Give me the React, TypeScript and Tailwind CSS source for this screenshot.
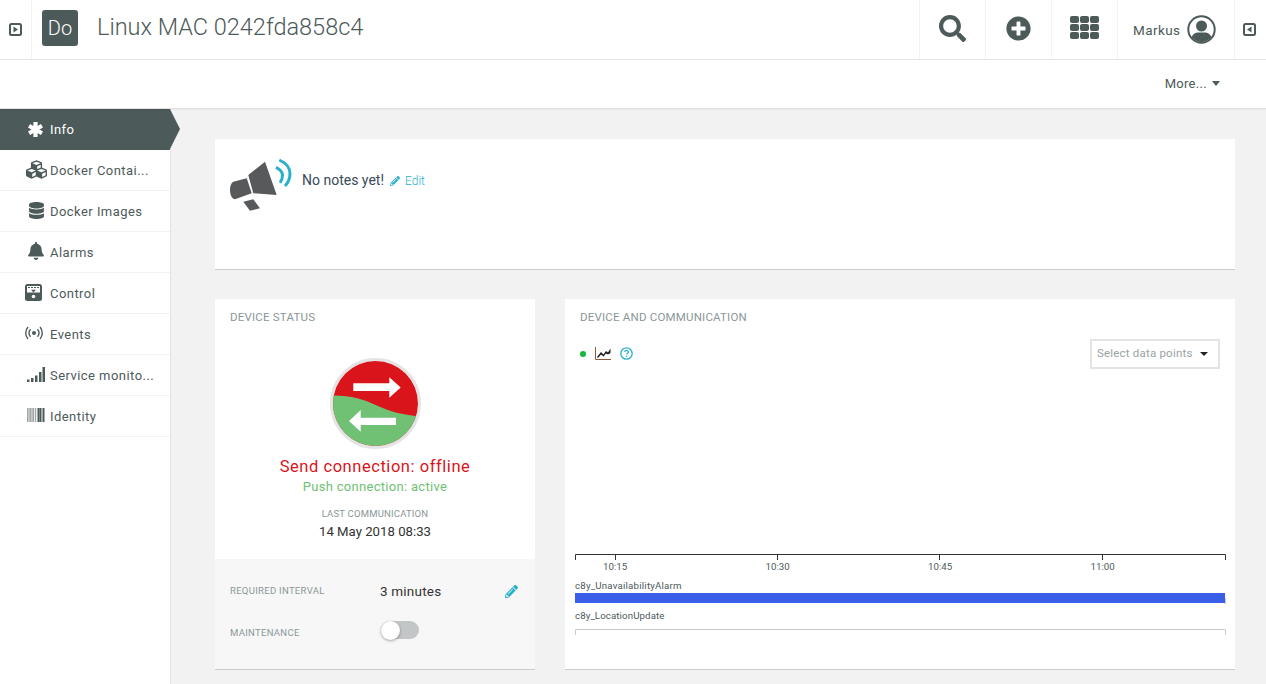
import { FaBell, FaCubes, FaDatabase, FaPencilAlt, FaPlusCircle, FaSearch } from "react-icons/fa";

const font = { fontFamily: "Roboto, sans-serif" };

function ToggleIcon({ flip }: { flip?: boolean }) {
  return (
    <svg width="13" height="13" viewBox="0 0 13 13" style={flip ? { transform: "scaleX(-1)" } : undefined}>
      <rect x="1" y="1" width="11" height="11" rx="1.5" fill="none" stroke="#4d5a5a" strokeWidth="2" />
      <path d="M4.5 3.5 9 6.5 4.5 9.5z" fill="#4d5a5a" />
    </svg>
  );
}

function GridIcon() {
  const cells = [0, 1, 2, 3, 4, 5, 6, 7, 8];
  return (
    <svg width="29" height="23" viewBox="0 0 29 23" fill="#4d5a5a" className="mb-[4px]">
      {cells.map((i) => (
        <rect key={i} x={(i % 3) * 10} y={Math.floor(i / 3) * 8} width="9" height="7" rx="2" />
      ))}
    </svg>
  );
}

function UserIcon() {
  return (
    <svg width="29" height="29" viewBox="0 0 29 29">
      <defs>
        <clipPath id="user-clip">
          <circle cx="14.5" cy="14.5" r="12.5" />
        </clipPath>
      </defs>
      <circle cx="14.5" cy="14.5" r="13.2" fill="none" stroke="#4d5a5a" strokeWidth="2" />
      <g clipPath="url(#user-clip)" fill="#4d5a5a">
        <circle cx="14.5" cy="11" r="5.5" />
        <path d="M3.5 29c0-8 3-11 7-11.5h8c4 .5 7 3.5 7 11.5z" />
      </g>
    </svg>
  );
}

function AsteriskIcon() {
  return (
    <svg width="15" height="15" viewBox="0 0 15 15" stroke="#fff" strokeWidth="4.2">
      <path d="M7.5 0v15M1 3.7l13 7.600M1 11.300l13-7.600" />
    </svg>
  );
}

function ControlIcon() {
  return (
    <svg width="17" height="17" viewBox="0 0 17 17" className="mr-[5px]">
      <rect width="17" height="17" rx="2.5" fill="#4d5a5a" />
      <rect x="2" y="2" width="13" height="6.5" fill="#fff" />
      <path d="M3 3.500h2M6 3.500h2M9 3.500h2M12 3.500h2" stroke="#4d5a5a" strokeWidth="1.2" />
      <path d="M8.500 8.500 6 5.800h5z" fill="#4d5a5a" />
      <circle cx="8.500" cy="12.500" r="1.800" fill="#fff" />
    </svg>
  );
}

function EventsIcon() {
  return (
    <svg width="18" height="14" viewBox="0 0 18 14" fill="none" stroke="#4d5a5a" strokeWidth="1.4" className="mr-[5px]">
      <circle cx="9" cy="7" r="2" fill="#4d5a5a" stroke="none" />
      <path d="M5.500 3.200a5.500 5.500 0 0 0 0 7.600M12.500 3.200a5.500 5.500 0 0 1 0 7.600" />
      <path d="M3 1a9 9 0 0 0 0 12M15 1a9 9 0 0 1 0 12" />
    </svg>
  );
}

function SignalIcon() {
  return (
    <svg width="18" height="15" viewBox="0 0 18 15" fill="#4d5a5a">
      <rect x="0" y="12.500" width="2.500" height="2.500" />
      <rect x="4" y="11" width="2.500" height="4" />
      <rect x="8" y="8.500" width="2.500" height="6.500" />
      <rect x="12" y="5" width="2.500" height="10" />
      <rect x="15.500" y="0" width="2.500" height="15" />
    </svg>
  );
}

function BarcodeIcon() {
  const bars = [0, 1.5, 3, 4.500, 6, 8, 10.500, 12.500, 15.500];
  return (
    <svg width="18" height="14" viewBox="0 0 18 14">
      {bars.map((x, i) => (
        <rect key={x} x={x} width={i > 5 ? 2 : 1.2} height="14" fill={i > 5 ? "#4d5a5a" : "#a0a6a6"} />
      ))}
    </svg>
  );
}

function Megaphone() {
  return (
    <svg width="64" height="54" viewBox="0 0 64 54" fill="#58595b">
      <path d="M18.300 17 35 3.700 46.700 37 23.300 35.300z" />
      <path d="M16.700 20.300 21.700 35.300 5 41.300C1.500 41 0 36 0 32c0-4 1-7 3.300-8.300z" />
      <path d="M13.300 43.700 23.300 41.300 30 50.300 20 52.700z" />
      <path d="M46 9.300c4 2 6.500 5 6.500 8 0 3-1 5.500-2.500 7.400" fill="none" stroke="#29b0cc" strokeWidth="3" />
      <path d="M49.300 2c6.500 3 10.700 8 10.700 13.500 0 4.500-1.700 9-5 12.500" fill="none" stroke="#29b0cc" strokeWidth="3" />
    </svg>
  );
}

function StatusCircle() {
  return (
    <svg width="92" height="92" viewBox="0 0 92 92" className="ml-[1px]">
      <defs>
        <clipPath id="status-clip">
          <circle cx="45.500" cy="45.500" r="42.500" />
        </clipPath>
      </defs>
      <circle cx="45.500" cy="45.500" r="44" fill="#fff" stroke="#e4e4e4" strokeWidth="3" />
      <g clipPath="url(#status-clip)">
        <rect width="92" height="92" fill="#d9141b" />
        <path d="M0 37.500C20 37 33 41 48 48c12 5.500 24 9 44 10.500V92H0z" fill="#70c174" />
      </g>
      <path d="M23.300 25.300H59.300V19.300L70.700 29.500 59.300 39.700V33H23.300z" fill="#fff" />
      <path d="M66 59.700H30.700V52L19 63l11.700 10.700V67H66z" fill="#fff" />
    </svg>
  );
}

function Chart() {
  const ticks = [40.5, 202.5, 364.5, 527.5];
  return (
    <svg width="652" height="82" viewBox="0 0 652 82" className="block">
      <path d="M.5 6V.5h650V6" fill="none" stroke="#333" strokeWidth="1" />
      {ticks.map((x) => (
        <path key={x} d={`M${x} 1v5`} stroke="#333" />
      ))}
      <path d="M650.500 44v6" stroke="#ccc" />
      <rect y="39" width="650" height="10" fill="#3b5ee8" />
      <path d="M.5 81v-5.500h650V81" fill="none" stroke="#ccc" strokeWidth="1" />
    </svg>
  );
}

const sideItems = [
  { label: "Docker Contai...", icon: <FaCubes size={21} color="#4d5a5a" /> },
  { label: "Docker Images", icon: <FaDatabase size={17} color="#4d5a5a" /> },
  { label: "Alarms", icon: <FaBell size={18} color="#4d5a5a" /> },
  { label: "Control", icon: <ControlIcon /> },
  { label: "Events", icon: <EventsIcon /> },
  { label: "Service monito...", icon: <SignalIcon /> },
  { label: "Identity", icon: <BarcodeIcon /> },
];

function HeaderCell({ children }: { children: React.ReactNode }) {
  return <div className="flex h-full w-[66px] items-center justify-center border-l border-[#f2f2f2]">{children}</div>;
}

export default function App() {
  return (
    <div className="flex h-[684px] w-[1266px] flex-col overflow-hidden bg-[#f2f2f2] text-[#4d5a5a]" style={font}>
      <header className="z-20 flex h-[60px] shrink-0 items-center border-b border-[#e4e4e4] bg-white pr-px">
        <div className="flex h-full w-[32px] items-center justify-center border-r border-[#f2f2f2]">
          <ToggleIcon />
        </div>
        <div className="mb-[3px] ml-[10px] flex h-[36px] w-[36px] items-center justify-center rounded-[3px] bg-[#4d5a5a] text-[20px] font-light text-white">
          Do
        </div>
        <h1 className="mb-[4px] ml-[19px] text-[23.5px] font-light text-[#4d5a5a]">Linux MAC 0242fda858c4</h1>
        <div className="ml-auto flex h-full items-center">
          <HeaderCell>
            <FaSearch size={27} color="#4d5a5a" className="mb-[2px]" />
          </HeaderCell>
          <HeaderCell>
            <FaPlusCircle size={25} color="#4d5a5a" className="mb-[2px]" />
          </HeaderCell>
          <HeaderCell>
            <GridIcon />
          </HeaderCell>
          <div className="flex h-full w-[117px] items-center gap-[7px] border-l border-[#f2f2f2] pl-[15px]">
            <span className="mt-[1px] text-[13.5px] tracking-[0.4px]">Markus</span>
            <UserIcon />
          </div>
          <div className="flex h-full w-[31px] items-center justify-center border-l border-[#f2f2f2] pr-[2px]">
            <ToggleIcon flip />
          </div>
        </div>
      </header>

      <div className="z-10 flex h-[49px] shrink-0 items-center justify-end border-b border-[#e0e0e0] bg-white pb-[1px] pr-[45px] shadow-[0_1px_2px_rgba(0,0,0,0.04)]">
        <span className="text-[13px] tracking-[0.3px]">More...</span>
        <span className="ml-[5px] mr-[1px] h-0 w-0 border-x-[4.5px] border-t-[5px] border-x-transparent border-t-[#4d5a5a]" />
      </div>

      <div className="flex min-h-0 flex-1">
        <nav className="w-[171px] shrink-0 border-r border-[#e4e4e4] bg-white">
          <div className="relative flex h-[41px] items-center bg-[#4d5a5a] text-white">
            <span className="flex w-[50px] justify-end pr-[7px]">
              <AsteriskIcon />
            </span>
            <span className="text-[13px] tracking-[0.45px]">Info</span>
            <span className="absolute left-[170px] top-0 h-0 w-0 border-y-[20.5px] border-l-[10px] border-y-transparent border-l-[#4d5a5a]" />
          </div>
          {sideItems.map((item) => (
            <div key={item.label} className="flex h-[41px] items-center border-b border-[#f2f2f2]">
              <span className="mb-[2px] flex w-[50px] shrink-0 justify-end pr-[2px]">
                <span className="flex w-[24px] justify-center">{item.icon}</span>
              </span>
              <span className="mt-[1px] text-[13px] tracking-[0.45px]">{item.label}</span>
            </div>
          ))}
        </nav>

        <main className="flex min-w-0 flex-1 flex-col gap-[29px] pl-[44px] pr-[31px] pt-[30px]">
          <section className="flex h-[131px] shrink-0 items-start border-b border-[#ccc] bg-white pl-[15px] pt-[19px]">
            <Megaphone />
            <span className="ml-[8px] mt-[12px] text-[14px] text-[#3a4a5a]">No notes yet!</span>
            <span className="ml-[6px] mt-[14px] flex items-center gap-[5px] text-[12px] font-light text-[#29b0cc]">
              <FaPencilAlt size={10} color="#29b0cc" />
              Edit
            </span>
          </section>

          <div className="flex h-[371px] shrink-0 gap-[30px]">
            <section className="flex w-[320px] flex-col border-b border-[#ccc] bg-white">
              <h2 className="px-[15px] pt-[11px] text-[11.5px] uppercase leading-[14px] tracking-[0.2px] text-[#8a9797]">
                Device status
              </h2>
              <div className="mt-[34px] flex flex-1 flex-col items-center">
                <StatusCircle />
                <p className="mt-[6px] text-[16.5px] leading-[22px] tracking-[0.55px] text-[#d9141b]">Send connection: offline</p>
                <p className="text-[13px] leading-[18px] tracking-[0.3px] text-[#70c174]">Push connection: active</p>
                <p className="mt-[12px] text-[9.5px] uppercase leading-[12px] tracking-[0.2px] text-[#8a9797]">Last communication</p>
                <p className="mt-[3px] text-[13.2px] leading-[18px] text-[#333]">14 May 2018 08:33</p>
              </div>
              <div className="h-[110px] bg-[#f7f7f7] px-[15px] pt-[23px]">
                <div className="flex h-[18px] items-center">
                  <span className="w-[150px] text-[9.5px] uppercase tracking-[0.3px] text-[#8a9797]">Required interval</span>
                  <span className="text-[13.5px] tracking-[0.2px] text-[#333]">3 minutes</span>
                  <span className="ml-auto mr-[2px]">
                    <FaPencilAlt size={13} color="#29b0cc" />
                  </span>
                </div>
                <div className="mt-[24px] flex h-[18px] items-center">
                  <span className="w-[150px] text-[9.5px] uppercase tracking-[0.3px] text-[#8a9797]">Maintenance</span>
                  <span className="relative mb-[6px] ml-px h-[18px] w-[38px] rounded-full bg-[#c2c6c6]">
                    <span className="absolute left-0 top-[-0.5px] h-[19px] w-[19px] rounded-full bg-white shadow-[0_1px_3px_rgba(0,0,0,0.35)]" />
                  </span>
                </div>
              </div>
            </section>

            <section className="flex min-w-0 flex-1 flex-col border-b border-[#ccc] bg-white">
              <h2 className="px-[15px] pt-[11px] text-[11.5px] uppercase leading-[14px] tracking-[0.2px] text-[#8a9797]">
                Device and communication
              </h2>
              <div className="mt-[15px] flex h-[30px] items-center justify-between pl-[15px] pr-[15px]">
                <div className="-mt-px flex items-center gap-[9px]">
                  <span className="h-[6px] w-[6px] rounded-full bg-[#15b83c]" />
                  <svg width="16" height="13" viewBox="0 0 16 13" fill="none">
                    <path d="M.5 0v12.5H16" stroke="#8a5a3a" strokeWidth="1" />
                    <path d="M2 10 6 5l2.500 2.500L11 4l2 1.500L15.500 1.500V6L13 7.500 11 6.500 8.500 9.500 6 7.500 3 11z" fill="#1c1c1c" />
                  </svg>
                  <svg width="13" height="13" viewBox="0 0 13 13" fill="none">
                    <circle cx="6.5" cy="6.5" r="5.7" stroke="#29b0cc" strokeWidth="1.3" />
                    <path d="M4.600 5c.2-1.200 1-1.700 1.900-1.700 1.100 0 1.900.7 1.900 1.600 0 1.300-1.800 1.300-1.800 2.700" stroke="#29b0cc" strokeWidth="1.2" />
                    <rect x="5.9" y="8.7" width="1.300" height="1.300" fill="#29b0cc" />
                  </svg>
                </div>
                <div className="flex h-[30px] w-[130px] items-center justify-between border-[2px] border-[#e4e4e4] pl-[5px] pr-[10px]">
                  <span className="text-[11.5px] tracking-[0.2px] text-[#9aa3a3]">Select data points</span>
                  <span className="h-0 w-0 border-x-[4px] border-t-[4.5px] border-x-transparent border-t-[#222]" />
                </div>
              </div>
              <div className="mt-[185px] pl-[10px]">
                <Chart />
                <div className="relative -mt-[82px] h-[82px] text-[9.7px] text-[#4d5a5a]">
                  <span className="absolute left-[28px] top-[6px]">10:15</span>
                  <span className="absolute left-[190.5px] top-[6px]">10:30</span>
                  <span className="absolute left-[353px] top-[6px]">10:45</span>
                  <span className="absolute left-[515.5px] top-[6px]">11:00</span>
                  <span className="absolute left-0 top-[25px] tracking-[0.2px]">c8y_UnavailabilityAlarm</span>
                  <span className="absolute left-0 top-[55px] tracking-[0.1px]">c8y_LocationUpdate</span>
                </div>
              </div>
            </section>
          </div>
        </main>
      </div>
    </div>
  );
}
